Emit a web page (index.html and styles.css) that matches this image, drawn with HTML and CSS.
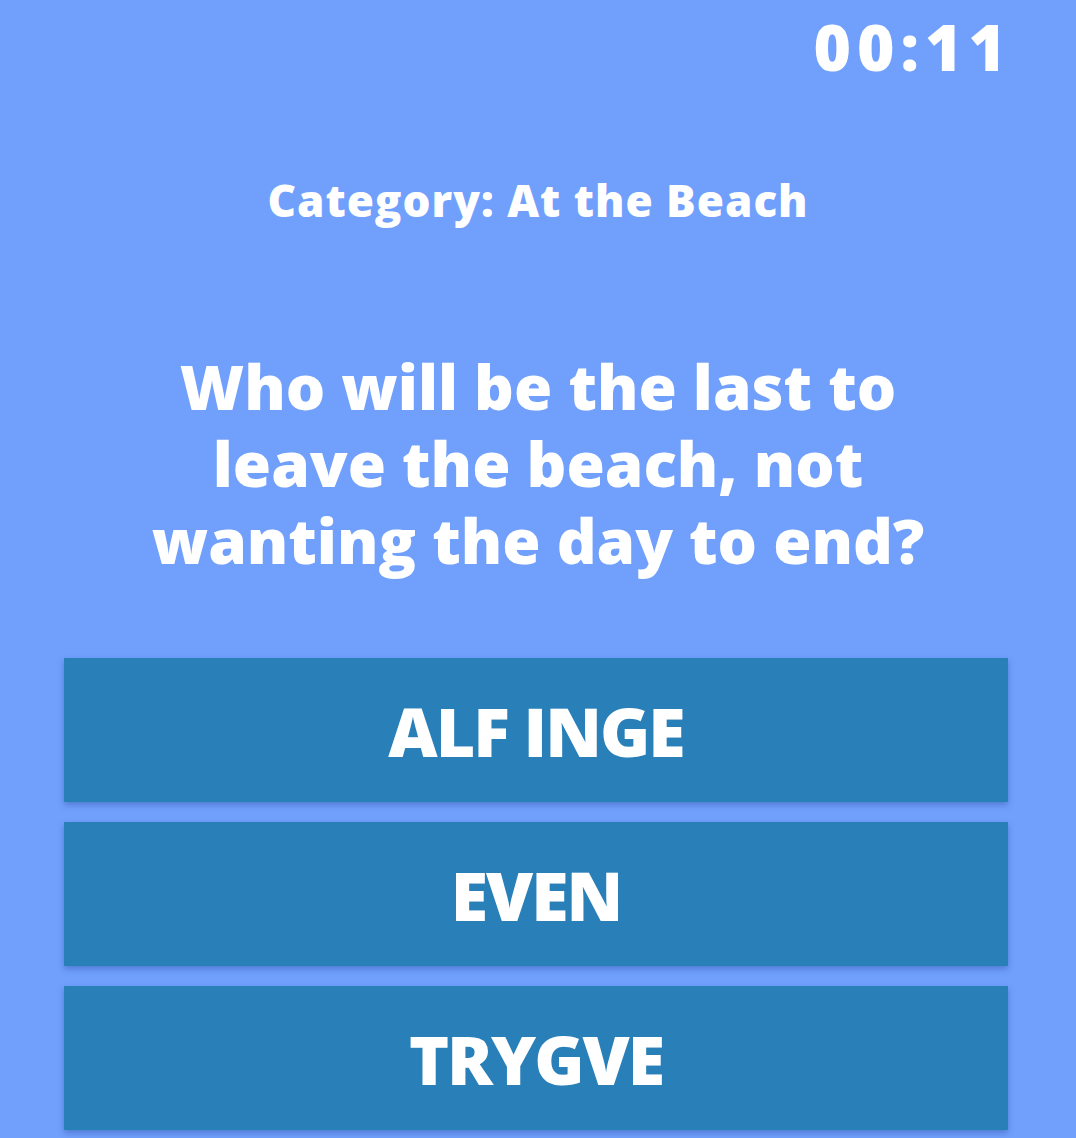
FILE: index.html
```html
<!DOCTYPE html>
<html>
<head>
<meta charset="utf-8">
<link rel="stylesheet" href="styles.css">
</head>
<body>
<div class="screen">
  <div class="timer">00:11</div>
  <div class="category">Category: At the Beach</div>
  <div class="question">Who will be the last to<br>leave the beach, not<br>wanting the day to end?</div>
  <div class="answers">
    <div class="answer">ALF INGE</div>
    <div class="answer">EVEN</div>
    <div class="answer">TRYGVE</div>
  </div>
</div>
</body>
</html>
```
FILE: styles.css
```css
html, body {
  margin: 0;
  padding: 0;
  background: #709ffc;
}
.screen {
  width: 1076px;
  height: 1138px;
  overflow: hidden;
  font-family: "Open Sans", "DejaVu Sans", sans-serif;
  font-weight: 800;
  color: #ffffff;
  display: flex;
  flex-direction: column;
}
.timer {
  align-self: flex-end;
  margin-top: 9px;
  margin-right: 68px;
  font-size: 64px;
  line-height: 76px;
  letter-spacing: 6px;
  padding-right: 0;
  transform: translateX(4px);
}
.category {
  text-align: center;
  margin-top: 87px;
  font-size: 44px;
  line-height: 56px;
  letter-spacing: 1px;
}
.question {
  text-align: center;
  margin-top: 120px;
  font-size: 62px;
  line-height: 77px;
  letter-spacing: 0;
}
.answers {
  margin: 79px 68px 0 64px;
  display: flex;
  flex-direction: column;
  gap: 20px;
}
.answer {
  background: #2980b9;
  height: 144px;
  display: flex;
  align-items: center;
  justify-content: center;
  font-size: 68px;
  letter-spacing: -2px;
  box-shadow: 0 3px 6px rgba(30, 60, 140, 0.35);
}
```
